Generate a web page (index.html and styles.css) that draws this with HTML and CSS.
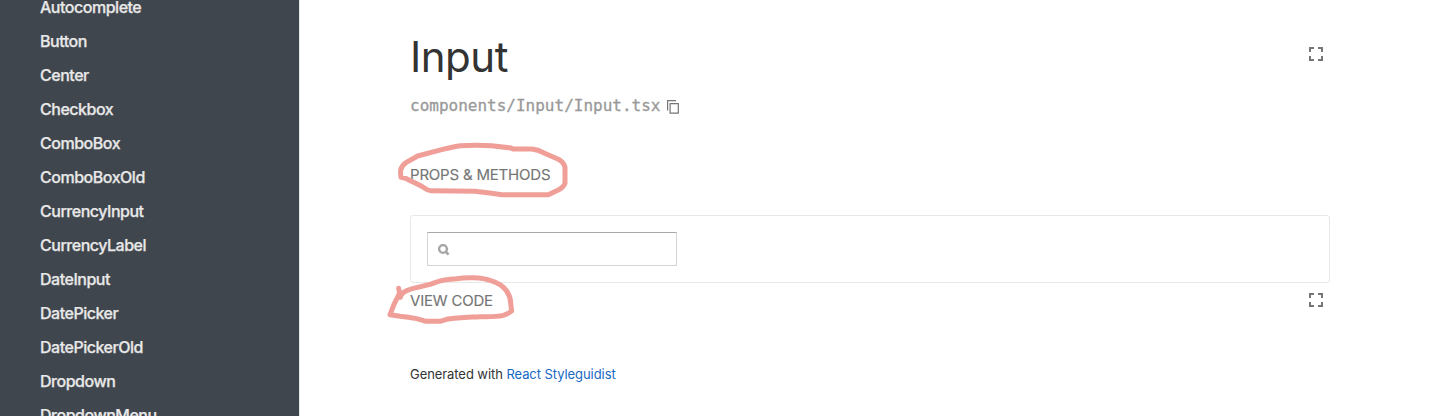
FILE: index.html
```html
<!DOCTYPE html>
<html lang="en">
<head>
<meta charset="utf-8">
<title>Input</title>
<link rel="stylesheet" href="styles.css">
</head>
<body>
<div class="layout">
  <nav class="sidebar">
    <a class="item">Autocomplete</a>
    <a class="item">Button</a>
    <a class="item">Center</a>
    <a class="item">Checkbox</a>
    <a class="item">ComboBox</a>
    <a class="item">ComboBoxOld</a>
    <a class="item">CurrencyInput</a>
    <a class="item">CurrencyLabel</a>
    <a class="item">DateInput</a>
    <a class="item">DatePicker</a>
    <a class="item">DatePickerOld</a>
    <a class="item">Dropdown</a>
    <a class="item">DropdownMenu</a>
  </nav>
  <main class="content">
    <header class="heading">
      <h1 class="title">Input</h1>
      <svg class="expand" viewBox="0 0 14 14"><path d="M0 5V0h5v2H2v3zM9 0h5v5h-2V2H9zM0 9h2v3h3v2H0zM12 9h2v5H9v-2h3z"/></svg>
    </header>
    <div class="path">
      <span>components/Input/Input.tsx</span>
      <svg class="copy" viewBox="0 0 12 14"><path d="M.6 10.5V.6H9M3.1 3.6h8.2v9.5H3.1z"/></svg>
    </div>
    <button class="tab props">Props &amp; methods</button>
    <section class="preview">
      <div class="field">
        <svg class="search" viewBox="0 0 12 12"><circle cx="5" cy="5" r="3.9"/><path d="M7.9 7.9l2.7 2.7"/></svg>
      </div>
    </section>
    <div class="toolbar">
      <button class="tab">View code</button>
      <svg class="expand" viewBox="0 0 14 14"><path d="M0 5V0h5v2H2v3zM9 0h5v5h-2V2H9zM0 9h2v3h3v2H0zM12 9h2v5H9v-2h3z"/></svg>
    </div>
    <footer class="footer">Generated with <a class="link">React Styleguidist</a></footer>
  </main>
</div>
<svg class="marks" viewBox="0 0 1440 416">
  <g transform="translate(385 130) scale(.33333)">
    <path d="M78 153C64 145 57 143 48 142Q46 132 47 120Q51 105 64 97L98 78L150 64C180 57 200 50 226 47Q275 44 320 47L378 54L384 57H440Q460 59 475 68L520 88Q536 96 540 112V160Q536 172 520 180L490 194H350L320 190L270 184L140 182Q130 183 118 174Q105 165 78 153"/>
  </g>
  <g transform="translate(380 265) scale(.33333)">
    <path d="M56 70L61 97Q64 84 82 76C110 65 140 64 170 51Q190 43 230 41C260 36 305 37 330 46Q365 56 380 78Q392 96 392 115L395 138Q386 146 370 151Q350 156 300 155C265 157 235 157 200 163L180 169H138L110 161Q85 156 60 154L30 149L42 118L60 82"/>
  </g>
</svg>
</body>
</html>
```
FILE: styles.css
```css
* { box-sizing: border-box; }
body {
  margin: 0;
  height: 416px;
  overflow: hidden;
  background: #fff;
  color: #333;
  font-family: Inter, "Liberation Sans", sans-serif;
}
.layout { display: flex; height: 416px; }
.sidebar {
  display: flex;
  flex: 0 0 300px;
  flex-direction: column;
  height: 426px;
  margin-top: -10px;
  padding-left: 40px;
  overflow: hidden;
  background: #40464d;
  border-right: 1px solid #e8e8e8;
}
.item {
  flex: 0 0 34px;
  color: #e8e8e8;
  font-size: 16px;
  font-weight: 500;
  line-height: 34px;
  letter-spacing: -0.48px;
  -webkit-text-stroke: 0.25px #e8e8e8;
}
.content { width: 920px; margin-left: 110px; }
.heading {
  display: flex;
  justify-content: space-between;
  height: 96px;
  padding: 30px 7px 0 0;
}
.title {
  margin: 0;
  font-size: 42px;
  font-weight: 400;
  line-height: 54px;
  letter-spacing: -0.5px;
}
.expand { width: 14px; height: 14px; fill: #767676; }
.heading .expand { margin-top: 17px; }
.path {
  display: flex;
  gap: 7px;
  height: 20px;
  color: #999;
  font: 16px/20px "DejaVu Sans Mono", monospace;
}
.path span { -webkit-text-stroke: 0.3px #999; }
.copy {
  width: 12px;
  height: 14px;
  margin-top: 4px;
  fill: none;
  stroke: #767676;
  stroke-width: 1.2;
}
.tab {
  display: block;
  padding: 0;
  border: 0;
  background: none;
  color: #767676;
  font: 15px/20px Inter, sans-serif;
  letter-spacing: -0.2px;
  text-transform: uppercase;
  -webkit-text-stroke: 0.15px #767676;
}
.props { margin-top: 49px; }
.preview {
  height: 68px;
  margin-top: 30px;
  padding: 16px;
  border: 1px solid #e8e8e8;
  border-radius: 3px;
}
.field {
  width: 250px;
  height: 34px;
  padding: 11px 10px;
  border: 1px solid #d4d4d4;
  border-top-color: #aaa;
}
.search {
  display: block;
  width: 12px;
  height: 12px;
  fill: none;
  stroke: #a5a5a5;
  stroke-width: 2.4;
}
.toolbar {
  display: flex;
  justify-content: space-between;
  padding: 8px 7px 0 0;
}
.toolbar .expand { margin-top: 2px; }
.footer {
  margin-top: 53px;
  font-size: 13px;
  line-height: 20px;
  letter-spacing: -0.07px;
}
.link { color: #1769c4; }
.marks {
  position: absolute;
  top: 0;
  left: 0;
  width: 1440px;
  height: 416px;
  fill: none;
  stroke: #f09e98;
  stroke-width: 15;
  stroke-linecap: round;
  stroke-linejoin: round;
  pointer-events: none;
}
```
